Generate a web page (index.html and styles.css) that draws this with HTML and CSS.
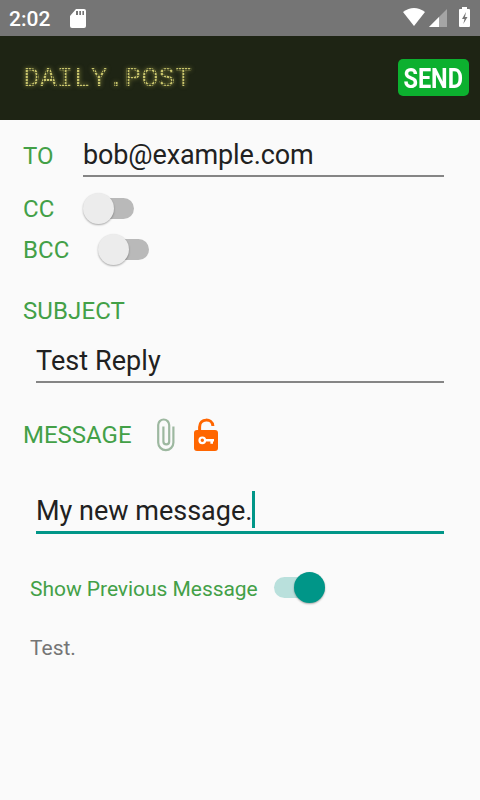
FILE: index.html
```html
<!DOCTYPE html>
<html lang="en">
<head>
<meta charset="utf-8">
<title>Daily.Post</title>
<link rel="stylesheet" href="styles.css">
</head>
<body>
<div class="status">
  <span class="clock">2:02</span>
  <svg class="sd" width="16" height="20" viewBox="0 0 16 20"><path fill="#fff" d="M6 0h8q2 0 2 2v15q0 2-2 2H2q-2 0-2-2V7z"/><path fill="#757575" d="M6 2h2v4H6zM9.300 2h1.700v4H9.300zM12.400 2H14v4h-1.600z"/></svg>
  <svg class="signals" width="68" height="22" viewBox="0 0 68 22"><path fill="#fff" d="M0 5Q11-3 22 5L11 19z"/><path fill="#a5a5a5" d="M44 2v18H26z"/><path fill="#fff" d="M36 10v10H26z"/><path fill="#fff" d="M59 0h5v2h2q1 0 1 1v16q0 1-1 1h-9q-1 0-1-1V3q0-1 1-1h2z"/><path fill="#757575" d="M63 5l-4 7h2.500l-1.200 5 4.200-7H62z"/></svg>
</div>
<header class="bar">
  <div class="logo">DAILY.POST</div>
  <button class="send"><span>SEND</span></button>
</header>
<main>
  <div class="row to"><label>TO</label><div class="field">bob@example.com</div></div>
  <div class="row cc"><label>CC</label><i class="switch"></i></div>
  <div class="row bcc"><label>BCC</label><i class="switch"></i></div>
  <div class="row heading"><label>SUBJECT</label></div>
  <div class="field subject">Test Reply</div>
  <div class="row message">
    <label>MESSAGE</label>
    <svg class="clip" width="20" height="36" viewBox="0 0 20 36" fill="none" stroke="#9db8a0" stroke-width="2.200"><path d="M17.400 9.500v16a7.600 7.600 0 0 1-15.200 0V8a5.500 5.500 0 0 1 11 0v16.500a2.900 2.900 0 0 1-5.800 0V9.500"/></svg>
    <svg class="lock" width="26" height="34" viewBox="0 0 26 34"><path d="M6.600 13V9c0-9 12.800-9 13.300-1" fill="none" stroke="#ff6600" stroke-width="3"/><rect x="1" y="12" width="24" height="21" rx="3" fill="#ff6600"/><circle cx="9.300" cy="22.300" r="2.800" fill="none" stroke="#fff" stroke-width="2.200"/><path d="M12.500 21H21v2.500h-1v2.300h-2.600v-2.300h-4.900z" fill="#fff"/></svg>
  </div>
  <div class="field body"><span class="typed">My new message.</span><span class="caret"></span></div>
  <div class="row previous"><label>Show Previous Message</label><i class="switch on"></i></div>
  <p class="quote">Test.</p>
</main>
</body>
</html>
```
FILE: styles.css
```css
* { box-sizing: border-box; }
body {
  margin: 0;
  width: 480px;
  height: 800px;
  overflow: hidden;
  background: #fafafa;
  font-family: Roboto, sans-serif;
  color: #212121;
}
.status {
  display: flex;
  height: 36px;
  padding: 0 9px;
  background: #757575;
  color: #fff;
}
.clock { width: 61px; font-size: 21px; font-weight: 500; line-height: 38px; }
.sd { margin-top: 9px; }
.signals { margin: 7px 0 0 auto; }
.bar {
  display: flex;
  justify-content: space-between;
  height: 84px;
  padding: 23px 11px 0 23px;
  background: #1e2414;
}
.logo {
  font: 28.200px/36px "Liberation Mono", monospace;
  height: 40px;
  padding-top: 2px;
  color: transparent;
  background:
    repeating-linear-gradient(90deg, transparent 0 2px, #1e2414aa 2px 3px),
    repeating-linear-gradient(0deg, transparent 0 2px, #1e2414aa 2px 3px),
    #c9c56c;
  -webkit-background-clip: text;
  background-clip: text;
  filter: drop-shadow(0 0 2px #b8b45080);
}
.send {
  width: 71px;
  height: 37px;
  padding: 0;
  border: 0;
  border-radius: 5px;
  background: #0cb02f;
  color: #fff;
  font: 700 27px/40px Roboto, sans-serif;
  display: flex;
  justify-content: center;
}
.send span { transform: scaleX(0.870); }
main { padding: 14px 36px 0 23px; }
.row { display: flex; align-items: center; color: #43a047; }
label { flex: none; font-size: 24px; line-height: 30px; letter-spacing: 0.100px; }
.field {
  height: 43px;
  font-size: 27px;
  line-height: 43px;
  color: #212121;
  border-bottom: 2px solid #858585;
}
.to { height: 43px; }
.to label { width: 60px; }
.to .field { flex: 1; letter-spacing: -0.130px; line-height: 42px; }
.cc { height: 41px; margin-top: 11px; }
.cc label { width: 60px; }
.bcc { height: 41px; }
.bcc label { width: 75px; }
.switch {
  display: block;
  position: relative;
  width: 51px;
  height: 21px;
  border-radius: 11px;
  background: linear-gradient(#b9b9b9, #b9b9b9) right / 36px 100% no-repeat;
}
.switch::after {
  content: "";
  position: absolute;
  left: 0;
  top: -5px;
  width: 31px;
  height: 31px;
  border-radius: 50%;
  background: #ececec;
  box-shadow: 0 1px 2px #00000055;
}
.switch.on { background: #b9e0dc; }
.switch.on::after { left: 20px; background: #009688; }
.heading { height: 40px; margin-top: 21px; }
.subject { margin: 9px 0 0 13px; letter-spacing: 0.070px; }
.message { height: 44px; margin-top: 30px; }
.message label { width: 133px; letter-spacing: 0; }
.lock { margin-left: 17px; }
.body {
  display: flex;
  align-items: center;
  margin: 32px 0 0 13px;
  height: 45px;
  border-bottom: 3px solid #009688;
}
.typed { padding-top: 2px; }
.caret { width: 3px; height: 37px; margin-bottom: 1px; background: #009688; }
.previous { height: 42px; margin: 32px 0 0 7px; }
.previous label { padding-top: 3px; font-size: 21px; letter-spacing: -0.040px; width: 244px; }
.quote { margin: 24px 0 0 7px; font-size: 21px; line-height: 32px; color: #757575; }
```
